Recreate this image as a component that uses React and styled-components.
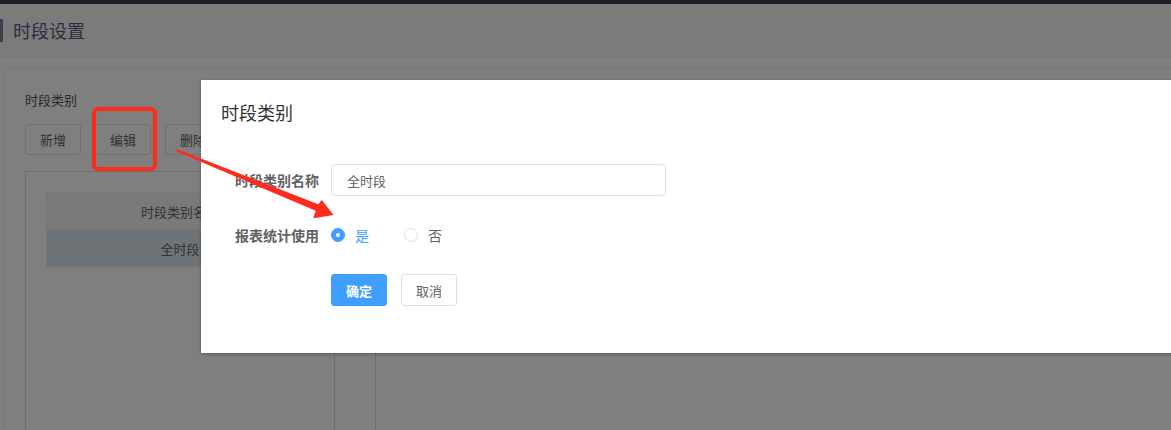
import React, { useState } from "react";
import styled, { createGlobalStyle } from "styled-components";

const GlobalStyle = createGlobalStyle`
  html, body {
    margin: 0;
    padding: 0;
    height: 430px;
    overflow: hidden;
    background: #fff;
    font-family: "Noto Sans CJK SC", "Noto Sans", sans-serif;
  }
`;

const Page = styled.div`
  position: relative;
  width: 1171px;
  height: 430px;
  display: flex;
  flex-direction: column;
  overflow: hidden;
`;

const TopBar = styled.div`
  height: 4px;
  background: #383a48;
  flex-shrink: 0;
`;

const Header = styled.div`
  height: 53px;
  background: #f6f6f6;
  border-bottom: 1px solid #f0f0f0;
  display: flex;
  align-items: center;
  flex-shrink: 0;
`;

const HeaderTitle = styled.h1`
  margin: 0;
  height: 23px;
  border-left: 3px solid #76829c;
  padding-left: 10px;
  font-size: 18px;
  font-weight: 400;
  line-height: 23px;
  color: #56607a;
`;

const Body = styled.div`
  flex: 1;
  padding: 10px 0 0 4px;
`;

const Panel = styled.section`
  height: 100%;
  border: 1px solid #eeeeee;
  border-right: none;
  border-bottom: none;
  padding: 22px 0 0 20px;
  box-sizing: border-box;
`;

const PanelTitle = styled.div`
  font-size: 13px;
  line-height: 18px;
  color: #555;
`;

const Toolbar = styled.div`
  display: flex;
  gap: 14px;
  margin-top: 15px;
`;

const ToolButton = styled.button`
  width: 56px;
  height: 31px;
  border: 1px solid #e0e0e0;
  border-radius: 3px;
  background: #fff;
  font-family: inherit;
  font-size: 13px;
  color: #666;
  padding: 0;
`;

const Columns = styled.div`
  display: flex;
  gap: 40px;
  margin-top: 16px;
  height: 300px;
`;

const TableBox = styled.div`
  width: 310px;
  border: 1px solid #dcdcdc;
  border-bottom: none;
  box-sizing: border-box;
  padding: 20px 20px 0 20px;
`;

const SideBox = styled.div`
  flex: 1;
  border-left: 1px solid #dcdcdc;
`;

const Table = styled.div`
  border: 1px solid #ececec;
`;

const Row = styled.div`
  height: 36px;
  display: flex;
  align-items: center;
  justify-content: center;
  font-size: 13px;
  color: #666;
  background: ${(p) => (p.$head ? "#f5f5f5" : p.$active ? "#dde7f0" : "#fff")};
  border-bottom: 1px solid #ececec;
  &:last-child {
    border-bottom: none;
  }
`;

const Mask = styled.div`
  position: absolute;
  inset: 0;
  background: rgba(0, 0, 0, 0.5);
`;

const Dialog = styled.div`
  position: absolute;
  left: 201px;
  top: 80px;
  width: 1100px;
  height: 273px;
  background: #fff;
  box-shadow: 0 1px 3px rgba(0, 0, 0, 0.3);
  padding: 20px 20px 0 20px;
  box-sizing: border-box;
`;

const DialogTitle = styled.div`
  font-size: 18px;
  line-height: 24px;
  color: #333;
`;

const Form = styled.div`
  margin-top: 40px;
  display: flex;
  flex-direction: column;
  gap: 23px;
`;

const FormItem = styled.div`
  display: flex;
  align-items: center;
  height: 32px;
`;

const Label = styled.label`
  width: 110px;
  padding-right: 12px;
  box-sizing: border-box;
  text-align: right;
  font-size: 14px;
  font-weight: 700;
  color: #606266;
`;

const Input = styled.input`
  width: 335px;
  height: 32px;
  box-sizing: border-box;
  border: 1px solid #dcdfe6;
  border-radius: 4px;
  padding: 0 15px;
  font-family: inherit;
  font-size: 13px;
  color: #606266;
  outline: none;
`;

const RadioOption = styled.label`
  display: flex;
  align-items: center;
  margin-right: 35px;
  font-size: 14px;
  color: ${(p) => (p.$checked ? "#409eff" : "#606266")};
  cursor: pointer;
`;

const RadioDot = styled.span`
  width: 14px;
  height: 14px;
  box-sizing: border-box;
  border-radius: 50%;
  border: 1px solid ${(p) => (p.$checked ? "#409eff" : "#dcdfe6")};
  background: ${(p) => (p.$checked ? "#409eff" : "#fff")};
  margin-right: 10px;
  display: flex;
  align-items: center;
  justify-content: center;
  &::after {
    content: "";
    width: 4px;
    height: 4px;
    border-radius: 50%;
    background: #fff;
    display: ${(p) => (p.$checked ? "block" : "none")};
  }
`;

const Actions = styled.div`
  display: flex;
  gap: 14px;
  padding-left: 110px;
`;

const ActionButton = styled.button`
  width: 56px;
  height: 32px;
  padding: 0;
  border-radius: 3px;
  font-family: inherit;
  font-size: 13px;
  border: 1px solid ${(p) => (p.$primary ? "#409eff" : "#dcdfe6")};
  background: ${(p) => (p.$primary ? "#409eff" : "#fff")};
  color: ${(p) => (p.$primary ? "#fff" : "#606266")};
  font-weight: ${(p) => (p.$primary ? 700 : 400)};
`;

const Highlight = styled.div`
  position: absolute;
  left: 92px;
  top: 107px;
  width: 65px;
  height: 64px;
  box-sizing: border-box;
  border: 4px solid #ff2b1c;
  border-radius: 6px;
`;

const Arrow = styled.svg`
  position: absolute;
  left: 0;
  top: 0;
  pointer-events: none;
`;

export default function App() {
  const [name, setName] = useState("全时段");
  const [useReport, setUseReport] = useState(true);

  return (
    <Page>
      <GlobalStyle />
      <TopBar />
      <Header>
        <HeaderTitle>时段设置</HeaderTitle>
      </Header>
      <Body>
        <Panel>
          <PanelTitle>时段类别</PanelTitle>
          <Toolbar>
            <ToolButton>新增</ToolButton>
            <ToolButton>编辑</ToolButton>
            <ToolButton>删除</ToolButton>
          </Toolbar>
          <Columns>
            <TableBox>
              <Table>
                <Row $head>时段类别名称</Row>
                <Row $active>全时段</Row>
              </Table>
            </TableBox>
            <SideBox />
          </Columns>
        </Panel>
      </Body>

      <Mask />

      <Dialog>
        <DialogTitle>时段类别</DialogTitle>
        <Form>
          <FormItem>
            <Label>时段类别名称</Label>
            <Input value={name} onChange={(e) => setName(e.target.value)} />
          </FormItem>
          <FormItem>
            <Label>报表统计使用</Label>
            <RadioOption $checked={useReport} onClick={() => setUseReport(true)}>
              <RadioDot $checked={useReport} />是
            </RadioOption>
            <RadioOption $checked={!useReport} onClick={() => setUseReport(false)}>
              <RadioDot $checked={!useReport} />否
            </RadioOption>
          </FormItem>
          <Actions>
            <ActionButton $primary>确定</ActionButton>
            <ActionButton>取消</ActionButton>
          </Actions>
        </Form>
      </Dialog>

      <Highlight />
      <Arrow width="1171" height="430" viewBox="0 0 1171 430">
        <polygon
          fill="#ff2b1c"
          points="176.5,148.9 318.3,204.3 321.7,200 333.5,215 313.3,218.3 315.7,210.7 175.5,151.1"
        />
      </Arrow>
    </Page>
  );
}
